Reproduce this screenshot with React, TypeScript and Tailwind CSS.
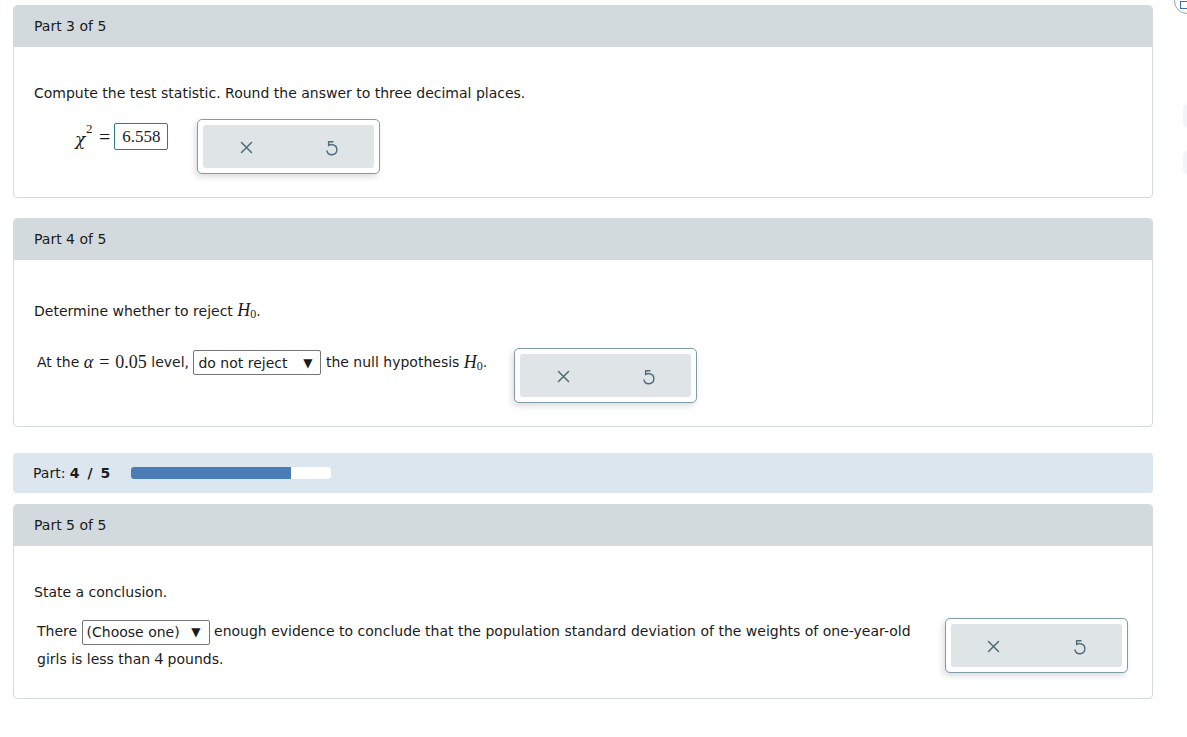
import React from "react";

const XIcon = () => (
  <svg width="13" height="13" viewBox="0 0 13 13" fill="none" stroke="#4d6b78" strokeWidth="1.5" strokeLinecap="round">
    <path d="M1.5 1.5 L11.5 11.5 M11.5 1.5 L1.5 11.5" />
  </svg>
);

const UndoIcon = () => (
  <svg width="13" height="16" viewBox="0 0 13 16" fill="none" stroke="#4d6b78" strokeWidth="1.4" strokeLinecap="round" strokeLinejoin="round">
    <path d="M8 1.8 H3.6 V5.6" />
    <path d="M3.7 5.5 C5 4.6 6.5 4.4 7.6 4.8 A5 5 0 1 1 2 11" />
  </svg>
);

const ButtonGroup = () => (
  <div className="w-[183px] h-[55px] rounded-[5px] border border-[#7f9ba6] bg-white p-[5px] shadow-[-2px_3px_6px_rgba(0,0,0,0.14)] shrink-0">
    <div className="w-full h-full rounded-[3px] bg-[#dfe5e7] flex">
      <div className="flex-1 flex items-center justify-center pt-[2px]">
        <XIcon />
      </div>
      <div className="flex-1 flex items-center justify-center pt-[2px]">
        <UndoIcon />
      </div>
    </div>
  </div>
);

const Select = ({ label }: { label: string }) => (
  <span className="inline-flex items-center justify-between w-[128px] h-[25px] border border-[#767676] rounded-[2px] pl-[4px] pr-[8px] align-middle bg-white leading-none">
    <span>{label}</span>
    <span className="text-[12px]">▼</span>
  </span>
);

const H0 = () => (
  <span className="font-['Liberation_Serif',serif] text-[18px]">
    <i>H</i>
    <sub className="text-[12px] relative top-[2px]">0</sub>
  </span>
);

const Card = ({ title, children }: { title: string; children: React.ReactNode }) => (
  <div className="rounded-[4px] border border-[#d3dbdf] overflow-hidden bg-white">
    <div className="h-[41px] bg-[#d2dadd] flex items-center px-[20px]">{title}</div>
    {children}
  </div>
);

export default function App() {
  return (
    <div className="relative w-[1187px] h-[737px] bg-white overflow-hidden text-[14px] text-[#1b1b1b] font-['DejaVu_Sans','Liberation_Sans',sans-serif]">
      <div className="absolute left-[1174px] top-[-12px] w-[26px] h-[26px] rounded-full border border-[#8fa5b0] bg-white flex items-center justify-center">
        <div className="w-[8px] h-[8px] border border-[#3b6fb0] mt-[8px] -ml-[6px]" />
      </div>
      <div className="absolute left-[1183px] top-[103px] w-[14px] h-[25px] rounded-[6px] bg-[#f2f4f5]" />
      <div className="absolute left-[1183px] top-[150px] w-[14px] h-[25px] rounded-[6px] bg-[#f2f4f5]" />

      <div className="ml-[13px] w-[1140px] pt-[5px] flex flex-col">
        <Card title="Part 3 of 5">
          <div className="pl-[20px] pr-[20px] pt-[36px] pb-[23px]">
            <div className="leading-[20px]">Compute the test statistic. Round the answer to three decimal places.</div>
            <div className="mt-[16px] flex items-start">
              <div className="ml-[41px] mt-[4px] flex items-center">
                <span className="relative w-[12px] h-[27px] flex items-center">
                  <span className="font-['DejaVu_Serif',serif] italic text-[17px] leading-none mt-[6px]">χ</span>
                  <span className="absolute left-[11px] top-[-4px] font-['Liberation_Serif',serif] text-[13px]">2</span>
                </span>
                <span className="ml-[12px] mr-[4px] font-['Liberation_Serif',serif] text-[20px] leading-none">=</span>
                <span className="w-[54px] h-[27px] border border-[#2d7c8c] rounded-[2px] flex items-center justify-center font-['Liberation_Serif',serif] text-[17px] text-[#222]">6.558</span>
              </div>
              <div className="ml-[29px]">
                <ButtonGroup />
              </div>
            </div>
          </div>
        </Card>

        <div className="mt-[20px]">
          <Card title="Part 4 of 5">
            <div className="pl-[20px] pr-[20px] pt-[40px] pb-[23px]">
              <div className="leading-[20px] flex items-baseline">
                <span>Determine whether to reject&nbsp;</span>
                <H0 />
                <span>.</span>
              </div>
              <div className="mt-[27px] flex items-start">
                <div className="ml-[3px] mt-[1px] flex items-center whitespace-nowrap">
                  <span>At the&nbsp;</span>
                  <span className="font-['Liberation_Serif',serif] text-[18px] flex items-center">
                    <i>α</i>
                    <span className="mx-[6px]">=</span>
                    <span>0.05</span>
                  </span>
                  <span>&nbsp;level,&nbsp;</span>
                  <Select label="do not reject" />
                  <span>&nbsp;the null hypothesis&nbsp;</span>
                  <H0 />
                  <span>.</span>
                </div>
                <div className="ml-[27px]">
                  <ButtonGroup />
                </div>
              </div>
            </div>
          </Card>
        </div>

        <div className="mt-[26px] h-[40px] rounded-[4px] bg-[#dce6ef] flex items-center pl-[20px]">
          <span>Part:&nbsp;</span>
          <span className="font-bold tracking-[1.5px]">4 / 5</span>
          <div className="ml-[19px] w-[200px] h-[12px] rounded-[3px] bg-white overflow-hidden">
            <div className="h-full bg-[#4a7db5]" style={{ width: "80%" }} />
          </div>
        </div>

        <div className="mt-[11px]">
          <Card title="Part 5 of 5">
            <div className="pl-[20px] pr-[20px] pt-[36px] pb-[25px]">
              <div className="leading-[20px]">State a conclusion.</div>
              <div className="mt-[16px] flex items-start">
                <div className="ml-[3px] w-[880px] leading-[27px]">
                  There <Select label="(Choose one)" /> enough evidence to conclude that the population standard deviation of the weights of one-year-old girls is less than{" "}
                  <span className="font-['Liberation_Serif',serif] text-[17px]">4</span> pounds.
                </div>
                <div className="ml-[28px]">
                  <ButtonGroup />
                </div>
              </div>
            </div>
          </Card>
        </div>
      </div>
    </div>
  );
}
